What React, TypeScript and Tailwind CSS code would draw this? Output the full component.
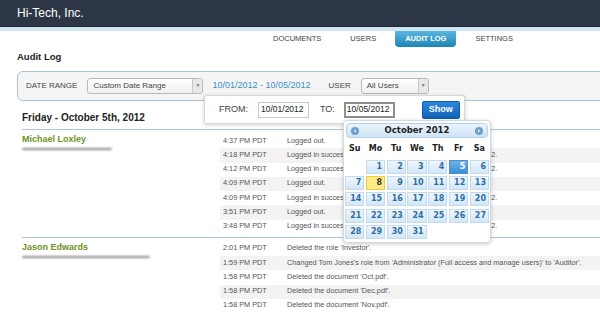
import type { ReactNode } from 'react'

type LogRow = { time: string; text: string }

type LogGroup = { name: string; blurWidth: string; rows: LogRow[] }

const loginText = 'Logged in successfully from remote IP address 192.168.100.122.'

const groups: LogGroup[] = [
  {
    name: 'Michael Loxley',
    blurWidth: 'w-[90px]',
    rows: [
      { time: '4:37 PM PDT', text: 'Logged out.' },
      { time: '4:18 PM PDT', text: loginText },
      { time: '4:12 PM PDT', text: loginText },
      { time: '4:09 PM PDT', text: 'Logged out.' },
      { time: '4:09 PM PDT', text: loginText },
      { time: '3:51 PM PDT', text: 'Logged out.' },
      { time: '3:48 PM PDT', text: loginText },
    ],
  },
  {
    name: 'Jason Edwards',
    blurWidth: 'w-[128px]',
    rows: [
      { time: '2:01 PM PDT', text: "Deleted the role 'Investor'." },
      { time: '1:59 PM PDT', text: "Changed Tom Jones's role from 'Administrator (Full access and manage users)' to 'Auditor'." },
      { time: '1:58 PM PDT', text: "Deleted the document 'Oct.pdf'." },
      { time: '1:58 PM PDT', text: "Deleted the document 'Dec.pdf'." },
      { time: '1:58 PM PDT', text: "Deleted the document 'Nov.pdf'." },
    ],
  },
]

const navItems = ['DOCUMENTS', 'USERS', 'AUDIT LOG', 'SETTINGS']

const weekDays = ['Su', 'Mo', 'Tu', 'We', 'Th', 'Fr', 'Sa']

function SelectBox({ label, width }: { label: string; width: string }) {
  return (
    <div className={`flex h-[16px] ${width} items-stretch rounded-[3px] border border-[#b9b9b9] bg-linear-to-b from-white to-[#f0f0f0]`}>
      <span className="flex flex-1 items-center pl-[5px] text-[8px] text-[#444]">{label}</span>
      <span className="flex w-[10px] items-center justify-center rounded-r-[3px] border-l border-[#c8c8c8] bg-[#e8e8e8] text-[5px] text-[#777]">▼</span>
    </div>
  )
}

function NavArrow({ dir }: { dir: 'prev' | 'next' }) {
  return (
    <span className="flex h-[8px] w-[8px] items-center justify-center rounded-full bg-[#6f9fcb]">
      <svg width="4" height="4" viewBox="0 0 4 4">
        {dir === 'prev' ? <path d="M3 0.3 L0.8 2 L3 3.7 Z" fill="#e8f2fb" /> : <path d="M1 0.3 L3.2 2 L1 3.7 Z" fill="#e8f2fb" />}
      </svg>
    </span>
  )
}

function DayCell({ day }: { day: number | null }) {
  if (day === null) return <div />
  let tone = 'border-[#c5dbec] bg-linear-to-b from-[#eef6fd] to-[#d3e7f7] text-[#2e6e9e]'
  if (day === 5) tone = 'border-[#4a90cf] bg-linear-to-b from-[#6fb3ea] to-[#3b8fd6] text-white'
  if (day === 8) tone = 'border-[#f0cf3a] bg-[#fbec88] text-[#363636]'
  return (
    <div className={`flex h-[14px] items-center justify-end border pr-[2px] font-['DejaVu_Sans',sans-serif] text-[8px] font-bold ${tone}`}>
      {day}
    </div>
  )
}

function Calendar() {
  const days: (number | null)[] = [null]
  for (let d = 1; d <= 31; d++) days.push(d)
  return (
    <div className="absolute left-[343px] top-[120px] w-[148px] rounded-[4px] border border-[#cfd9e2] bg-white pb-[3px] shadow-[0_1px_4px_rgba(0,0,0,0.2)]">
      <div className="mx-[2px] mt-[2px] flex h-[15px] items-center justify-between rounded-[4px] border border-[#b5d1e8] bg-linear-to-b from-[#eaf4fd] to-[#cfe3f5] px-[4px]">
        <NavArrow dir="prev" />
        <span className="font-['DejaVu_Sans',sans-serif] text-[8.5px] font-bold text-[#222]">October 2012</span>
        <NavArrow dir="next" />
      </div>
      <div className="grid grid-cols-7 gap-x-[1.5px] px-[1px] pt-[5px] pb-[5px]">
        {weekDays.map((w) => (
          <span key={w} className="text-center font-['DejaVu_Sans',sans-serif] text-[8px] font-bold text-[#222]">
            {w}
          </span>
        ))}
      </div>
      <div className="grid grid-cols-7 gap-x-[1.5px] gap-y-[2.2px] px-[1px]">
        {days.map((d, i) => (
          <DayCell key={i} day={d} />
        ))}
      </div>
    </div>
  )
}

function RangePopup() {
  return (
    <div className="absolute left-[204px] top-[95px] flex h-[29px] w-[261px] items-center rounded-[2px] border border-[#d8d8d8] bg-white pl-[14px] shadow-[0_1px_4px_rgba(0,0,0,0.18)]">
      <span className="text-[9px] text-[#444]">FROM:</span>
      <div className="ml-[10px] flex h-[16px] w-[51px] items-center border border-[#c9c9c9] pl-[2px] text-[8.5px] text-[#222]">10/01/2012</div>
      <span className="ml-[11px] text-[9px] text-[#444]">TO:</span>
      <div className="ml-[9px] flex h-[16px] w-[51px] items-center border-2 border-[#8f8f8f] pl-[1px] text-[8.5px] text-[#222]">10/05/2012</div>
      <button type="button" className="ml-[27px] h-[18px] w-[38px] rounded-[2px] border border-[#0e5aa8] bg-linear-to-b from-[#2a86dd] to-[#1263b8] text-[9px] font-bold text-white">
        Show
      </button>
    </div>
  )
}

function Group({ group, children }: { group: LogGroup; children?: ReactNode }) {
  return (
    <div className="flex border-t border-[#a9c4db] pt-[4px] pb-[3px]">
      <div className="w-[198px] shrink-0">
        <div className="text-[9px] font-bold leading-[10px] text-[#6f9223]">{group.name}</div>
        <div className={`mt-[4px] h-[2px] ${group.blurWidth} rounded-full bg-[#8a8a8a] blur-[1px]`} />
      </div>
      <div className="min-w-0 flex-1">
        {group.rows.map((row, i) => (
          <div key={i} className={`flex h-[14.25px] items-center pl-[3px] text-[7.3px] text-[#555] ${i % 2 === 1 ? 'bg-[#f3f3f3]' : 'bg-white'}`}>
            <span className="w-[64px] shrink-0">{row.time}</span>
            <span className="whitespace-nowrap">{row.text}</span>
          </div>
        ))}
        {children}
      </div>
    </div>
  )
}

export default function App() {
  return (
    <div className="relative h-[315px] w-[600px] overflow-hidden bg-white font-['Liberation_Sans',Arial,sans-serif]">
      <header className="flex h-[26px] items-center bg-[#2c3646] pl-[17px] text-[12px] text-white">Hi-Tech, Inc.</header>
      <div className="h-[5px] border-t border-[#1f2733] bg-[#cfe6f2]" />
      <nav className="flex h-[16px] gap-[9px] pl-[263px]">
        {navItems.map((item) =>
          item === 'AUDIT LOG' ? (
            <span key={item} className="flex items-center rounded-b-[4px] bg-linear-to-b from-[#5ab6de] to-[#1a85b8] px-[10px] text-[7.5px] font-bold text-white">
              {item}
            </span>
          ) : (
            <span key={item} className="flex items-center px-[10px] text-[7.5px] text-[#444]">
              {item}
            </span>
          ),
        )}
      </nav>
      <main className="pl-[17px]">
        <h1 className="mt-[4px] text-[9.5px] font-bold leading-[12px] text-[#222]">Audit Log</h1>
        <div className="mt-[8px] -mr-[10px] flex h-[30px] items-center rounded-l-[6px] border border-[#a9c4db] bg-[#f5f5f5] pl-[8px]">
          <span className="text-[8px] text-[#444]">DATE RANGE</span>
          <div className="ml-[10px]">
            <SelectBox label="Custom Date Range" width="w-[116px]" />
          </div>
          <span className="ml-[9px] text-[9px] text-[#3b8fc5]">10/01/2012 - 10/05/2012</span>
          <span className="ml-[18px] text-[8px] text-[#444]">USER</span>
          <div className="ml-[10px]">
            <SelectBox label="All Users" width="w-[68px]" />
          </div>
        </div>
        <div className="pl-[5px]">
          <h2 className="mt-[11px] mb-[5px] text-[10px] font-bold leading-[12px] text-[#222]">Friday - October 5th, 2012</h2>
          {groups.map((g) => (
            <Group key={g.name} group={g} />
          ))}
        </div>
      </main>
      <RangePopup />
      <Calendar />
    </div>
  )
}
